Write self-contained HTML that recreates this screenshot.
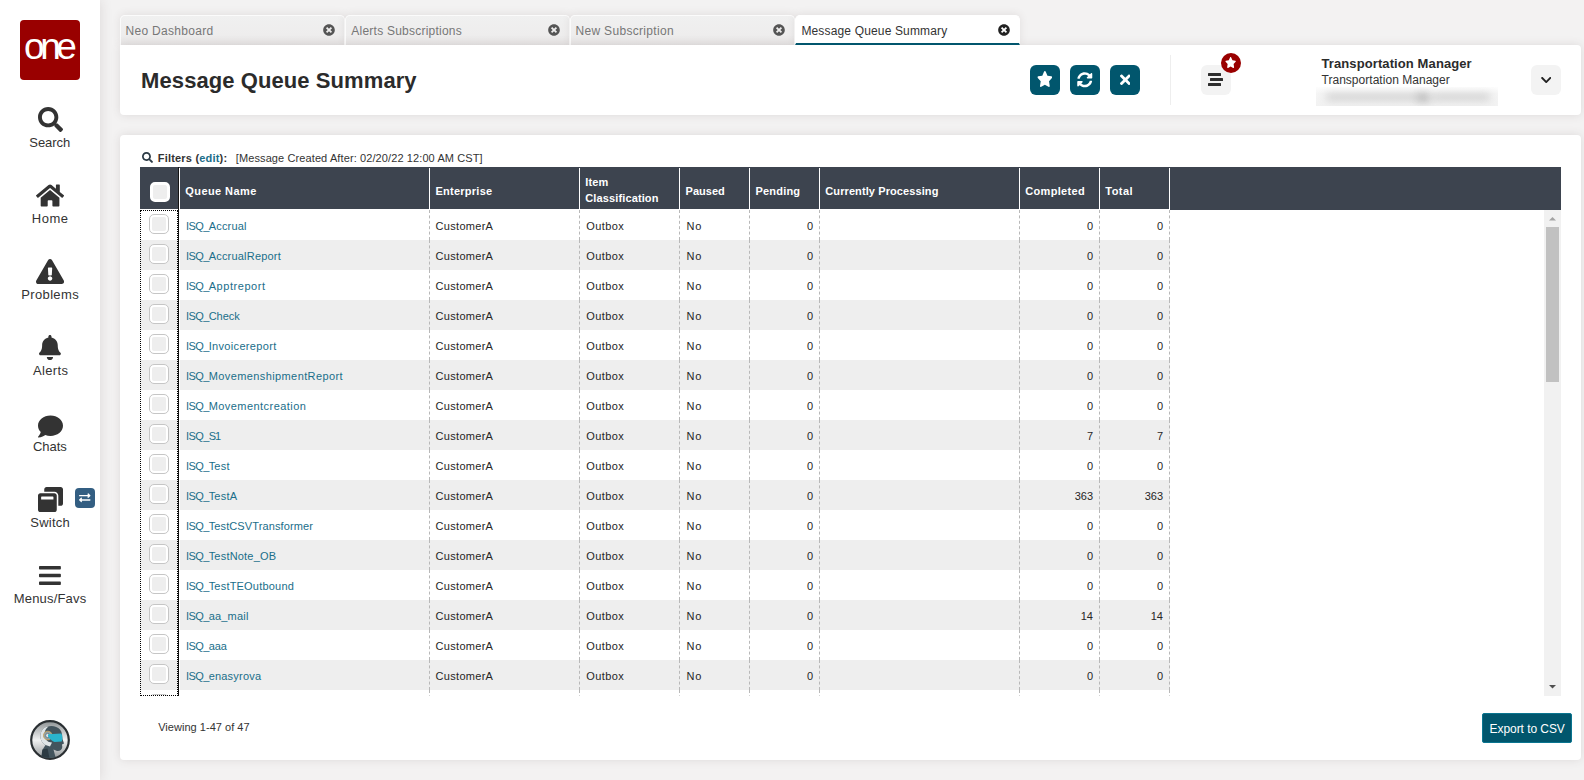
<!DOCTYPE html>
<html lang="en">
<head>
<meta charset="utf-8">
<title>Message Queue Summary</title>
<style>
*{box-sizing:border-box;margin:0;padding:0}
html,body{width:1584px;height:780px;overflow:hidden}
body{background:#f3f2f2;font-family:"Liberation Sans",sans-serif;color:#333;position:relative}
svg{display:block}
/* sidebar */
#side{position:absolute;left:0;top:0;width:100px;height:780px;background:#fff;box-shadow:0 0 12px rgba(60,40,40,.13);z-index:5}
#logo{position:absolute;left:20px;top:20px;width:60px;height:60px;border-radius:4px;background:#990000;color:#fff;overflow:hidden}
#logo span{position:absolute;left:4px;top:7px;font-size:37px;line-height:40px;letter-spacing:-4.4px;white-space:nowrap}
.nav{position:absolute;left:0;width:100px;text-align:center;font-size:13px;color:#333;line-height:16px;white-space:nowrap}
#swb{position:absolute;left:75px;top:488px;width:20px;height:20px;border-radius:4px;background:#335e82}
/* tabs */
.tab{position:absolute;top:15px;height:30px;border-radius:5px 5px 0 0;box-shadow:0 -1px 9px rgba(80,60,60,.10);background:linear-gradient(#f0f0f0 0,#eeeded 65%,#e6e4e4 100%);border:1px solid #fbfbfb;border-bottom:0;font-size:12px;color:#777;line-height:31px;padding-left:5px;white-space:nowrap}
.tab svg{position:absolute;right:9px;top:8px;fill:#555}
.tab.on{z-index:3;clip-path:inset(-12px -12px 0 -12px);background:#fff;color:#333;border-color:#fff;border-bottom:2px solid #01566d}
.tab.on svg{fill:#222;right:9.3px}
/* panels */
.panel{position:absolute;background:#fff;border-radius:4px;box-shadow:0 0 10px rgba(80,60,60,.13)}
#hdr{z-index:2;left:120px;top:45px;width:1461px;height:70px;border-radius:0 4px 4px 4px}
#title{position:absolute;left:20px;top:21px;font-size:22px;font-weight:bold;color:#2b2b2b;line-height:30px;white-space:nowrap}
.btn{position:absolute;top:20px;width:30px;height:30px;border-radius:6px;background:#01566d}
.btn svg{position:absolute;fill:#fff}
.gbtn{position:absolute;top:20px;width:30px;height:30px;border-radius:6px;background:#f3f3f3}
.gbtn i{position:absolute;width:13px;height:3px;background:#2e2e2e;border-radius:.5px}
#vdiv{position:absolute;left:1050px;top:10px;width:1px;height:50px;background:#eee}
#badge{position:absolute;left:1101px;top:8px;width:20px;height:20px;border-radius:50%;background:#990000}
#uname{position:absolute;left:1201px;top:11px;font-size:13px;font-weight:bold;line-height:16px;color:#2b2b2b;white-space:nowrap}
#urole{position:absolute;left:1201px;top:28px;font-size:12px;line-height:15px;color:#333;white-space:nowrap}
#ublur{position:absolute;left:1196px;top:42px;width:182px;height:19px;background:linear-gradient(#fdfdfd 0,#f5f5f5 35%,#f2f2f2 100%);overflow:hidden}
#ublur i{position:absolute;top:7px;height:6px;background:#8a8a8a;filter:blur(4px);opacity:.4}
#main{left:120px;top:135px;width:1461px;height:625px}
/* grid */
#filters{position:absolute;left:37px;top:16px;font-size:11px;line-height:14px;white-space:nowrap;color:#333}
#filters .lk{color:#1a6e8a}
#s_fv{margin-left:9px}
#ghead{position:absolute;left:20px;top:32px;width:1421px;height:42px;background:#3d444f}
.hc{position:absolute;top:1px;height:41px;border-right:1px solid #fff;color:#fff;font-weight:bold;font-size:11px;padding-left:5px;line-height:16px}
.hc>span{position:absolute;left:5px;top:15px;white-space:nowrap}
.hc>span.two{top:7px;line-height:15.5px}
.hcb{position:absolute;left:10px;top:14px;width:20px;height:20px;border-radius:5px;background:#eee;border:3px solid #fff}
#gbody{position:absolute;left:20px;top:75px;width:1404px;height:486px;overflow:hidden}
.row{position:absolute;left:0;width:1030px;height:30px}
.row.alt{background:#eee}
.c{position:absolute;top:0;height:30px;line-height:32px;font-size:11px;color:#262626;padding:0 6px;white-space:nowrap;border-right:1px dashed #b8b8b8}
.c.r{text-align:right}
.c.l{color:#1a6e8a}
.vline{position:absolute;top:0;width:0;height:486px;border-left:1px dashed #b5b5b5}
.cb{position:absolute;left:9px;top:4px;width:20px;height:20px;border:1px solid #c6c6c6;border-radius:5px;background:#fff}
.cb:after{content:"";position:absolute;left:2px;top:2px;right:2px;bottom:2px;background:#eee;border-radius:2px}
#focus{position:absolute;left:0;top:0;width:38px;height:486px;border:1px dotted #000}
#fl{position:absolute;left:38px;top:0;width:1px;height:486px;background:#111}
#wl{position:absolute;left:39px;top:0;width:1px;height:486px;background:#fff}
#sbar{position:absolute;left:1424px;top:75px;width:17px;height:486px}
#viewing{position:absolute;left:37px;top:585px;font-size:11px;line-height:14px;color:#333;white-space:nowrap}
#export{position:absolute;left:1362px;top:578px;width:90px;height:30px;background:#01566d;border:1px solid #0a7590;color:#fff;font-size:12px;line-height:28px;padding-top:1px;border-radius:2px;text-align:center;white-space:nowrap}
</style>
</head>
<body>
<div id="side">
<div id="logo"><span>one</span></div>
<svg viewBox="0 0 512 512" width="25.00" height="25" style="position:absolute;left:37.50px;top:107px;fill:#333"><path d="M505 442.7L405.3 343c-4.5-4.5-10.6-7-17-7H372c27.600-35.300 44-79.700 44-128C416 93.100 322.900 0 208 0S0 93.100 0 208s93.100 208 208 208c48.300 0 92.700-16.400 128-44v16.300c0 6.400 2.500 12.500 7 17l99.700 99.700c9.400 9.400 24.600 9.400 33.900 0l28.300-28.300c9.400-9.400 9.400-24.600.1-34zM208 336c-70.700 0-128-57.200-128-128 0-70.700 57.200-128 128-128 70.700 0 128 57.200 128 128 0 70.700-57.200 128-128 128z"/></svg>
<div class="nav" style="top:135px"><span id="s_nav0" style="letter-spacing:-0.060px;position:relative;left:-0.30px">Search</span></div>
<svg viewBox="0 0 576 512" width="28.12" height="25" style="position:absolute;left:35.94px;top:183px;fill:#333"><path d="M280.37 148.26L96 300.11V464a16 16 0 0 0 16 16l112.060-.29a16 16 0 0 0 15.920-16V368a16 16 0 0 1 16-16h64a16 16 0 0 1 16 16v95.640a16 16 0 0 0 16 16.050L464 480a16 16 0 0 0 16-16V300L295.670 148.260a12.190 12.190 0 0 0-15.300 0zM571.600 251.470L488 182.560V44.050a12 12 0 0 0-12-12h-56a12 12 0 0 0-12 12v72.610L318.470 43a48 48 0 0 0-61 0L4.340 251.470a12 12 0 0 0-1.600 16.900l25.500 31A12 12 0 0 0 45.150 301l235.220-193.740a12.190 12.190 0 0 1 15.300 0L530.900 301a12 12 0 0 0 16.900-1.600l25.500-31a12 12 0 0 0-1.700-16.930z"/></svg>
<div class="nav" style="top:211px"><span id="s_nav1" style="letter-spacing:0.517px;position:relative;left:0.15px">Home</span></div>
<svg viewBox="0 0 576 512" width="28.12" height="25" style="position:absolute;left:35.94px;top:259px;fill:#333"><path d="M569.517 440.013C587.975 472.007 564.806 512 527.940 512H48.054c-36.937 0-59.999-40.055-41.577-71.987L246.423 23.985c18.467-32.009 64.720-31.951 83.154 0l239.940 416.028zM288 354c-25.405 0-46 20.595-46 46s20.595 46 46 46 46-20.595 46-46-20.595-46-46-46zm-43.673-165.346l7.418 136c.347 6.364 5.609 11.346 11.982 11.346h48.546c6.373 0 11.635-4.982 11.982-11.346l7.418-136c.375-6.874-5.098-12.654-11.982-12.654h-63.383c-6.884 0-12.356 5.780-11.981 12.654z"/></svg>
<div class="nav" style="top:287px"><span id="s_nav2" style="letter-spacing:0.349px;position:relative;left:0.15px">Problems</span></div>
<svg viewBox="0 0 448 512" width="21.88" height="25" style="position:absolute;left:39.06px;top:335px;fill:#333"><path d="M224 512c35.320 0 63.970-28.650 63.970-64H160.030c0 35.350 28.650 64 63.970 64zm215.390-149.710c-19.320-20.760-55.470-51.990-55.470-154.290 0-77.700-54.480-139.900-127.940-155.160V32c0-17.670-14.320-32-31.980-32s-31.980 14.330-31.980 32v20.840C118.560 68.100 64.080 130.300 64.080 208c0 102.300-36.150 133.530-55.470 154.290-6 6.450-8.660 14.160-8.610 21.710.110 16.400 12.980 32 32.100 32h383.800c19.120 0 32-15.600 32.100-32 .050-7.550-2.610-15.270-8.610-21.710z"/></svg>
<div class="nav" style="top:363px"><span id="s_nav3" style="letter-spacing:0.360px;position:relative;left:0.59px">Alerts</span></div>
<svg viewBox="0 0 512 512" width="25.00" height="25" style="position:absolute;left:37.50px;top:413.6px;fill:#333"><path d="M256 32C114.600 32 0 125.100 0 240c0 49.600 21.400 95 57 130.700C44.500 421.100 2.700 466 2.200 466.500c-2.200 2.300-2.800 5.700-1.500 8.700S4.800 480 8 480c66.300 0 116-31.800 140.600-51.400 32.700 12.300 69 19.400 107.400 19.400 141.400 0 256-93.100 256-208S397.400 32 256 32z"/></svg>
<div class="nav" style="top:439.0px"><span id="s_nav4" style="letter-spacing:-0.025px;position:relative;left:-0.20px">Chats</span></div>
<svg viewBox="0 0 512 512" width="25.00" height="25" style="position:absolute;left:37.50px;top:487px;fill:#333"><path d="M512 48v288c0 26.500-21.500 48-48 48h-48V176c0-44.100-35.900-80-80-80H128V48c0-26.500 21.500-48 48-48h288c26.500 0 48 21.500 48 48zM384 176v288c0 26.500-21.500 48-48 48H48c-26.500 0-48-21.500-48-48V176c0-26.500 21.500-48 48-48h288c26.500 0 48 21.500 48 48zm-68 28c0-6.600-5.400-12-12-12H76c-6.600 0-12 5.400-12 12v52h252v-52z"/></svg>
<div class="nav" style="top:515px"><span id="s_nav5" style="letter-spacing:0.236px;position:relative;left:0.12px">Switch</span></div>
<svg viewBox="0 0 448 512" width="21.88" height="25" style="position:absolute;left:39.06px;top:563px;fill:#333"><path d="M16 132h416c8.837 0 16-7.163 16-16V76c0-8.837-7.163-16-16-16H16C7.163 60 0 67.163 0 76v40c0 8.837 7.163 16 16 16zm0 160h416c8.837 0 16-7.163 16-16v-40c0-8.837-7.163-16-16-16H16c-8.837 0-16 7.163-16 16v40c0 8.837 7.163 16 16 16zm0 160h416c8.837 0 16-7.163 16-16v-40c0-8.837-7.163-16-16-16H16c-8.837 0-16 7.163-16 16v40c0 8.837 7.163 16 16 16z"/></svg>
<div class="nav" style="top:591px"><span id="s_nav6" style="letter-spacing:0.177px;position:relative;left:0.10px">Menus/Favs</span></div>
<div id="swb"><svg viewBox="0 0 512 512" width="11.50" height="11.5" style="position:absolute;left:4.25px;top:4.25px;fill:#fff"><path d="M0 168v-16c0-13.255 10.745-24 24-24h360V80c0-21.367 25.899-32.042 40.971-16.971l80 80c9.372 9.373 9.372 24.569 0 33.941l-80 80C409.956 271.982 384 261.456 384 240v-48H24c-13.255 0-24-10.745-24-24zm488 152H128v-48c0-21.314-25.862-32.080-40.971-16.971l-80 80c-9.372 9.373-9.372 24.569 0 33.941l80 80C102.057 463.997 128 453.437 128 432v-48h360c13.255 0 24-10.745 24-24v-16c0-13.255-10.745-24-24-24z"/></svg></div>
<svg id="bot" width="40" height="40" viewBox="0 0 40 40" style="position:absolute;left:30px;top:720px">
<defs><linearGradient id="g1" x1="0" y1="0" x2="0" y2="1"><stop offset="0" stop-color="#8d9294"/><stop offset=".5" stop-color="#f1f2f2"/><stop offset="1" stop-color="#8f9496"/></linearGradient><linearGradient id="g2" x1="0" y1="0" x2="1" y2="0"><stop offset="0" stop-color="#2ab4cd" stop-opacity=".35"/><stop offset=".45" stop-color="#2ab4cd" stop-opacity=".9"/><stop offset="1" stop-color="#1fa6c2"/></linearGradient></defs>
<circle cx="20" cy="20" r="18.800" fill="url(#g1)" stroke="#2a2f32" stroke-width="2.2"/>
<path d="M11.500 36.500 L13 29 L15.500 25 C10 22 8.500 14 13 9 C17 5 26 4.500 30 9.500 C32.5 12.500 32 16 32.500 19 L34 23.500 L32 24.500 L32.3 27 C32 30 29.500 31.500 27 31 L23.500 29.500 L25.500 37.300 C21 38.500 16 38.500 11.500 36.500Z" fill="#43545d"/>
<path d="M15.5 25 C10 22 8.500 14 13 9 C14.5 7.500 16.500 6.800 18.500 6.500 C14.5 9.500 13.500 14 15.500 18.500 C17 21.500 19.500 22.500 22 22.500 L20 26.500 Z" fill="#dfe5e7"/>
<circle cx="17.8" cy="15.500" r="4.300" fill="#8fa1a8" stroke="#c9a45c" stroke-width=".9"/>
<circle cx="17.8" cy="15.500" r="2.200" fill="#dfe5e7" stroke="#5f747c" stroke-width=".8"/>
<path d="M18 14.300 L31.300 13.600 C32.6 15.500 32.600 19.500 31.700 21.600 L24.500 21.900 C21.500 21 19.500 18.500 18 16.500Z" fill="#2ab4cd"/>
<path d="M12.3 29.600 L17.500 28.500 L19.500 37.800 C16.500 37.800 13.500 37.300 11.500 36.500 Z" fill="#2c3a42"/>
</svg>
</div>
<div class="tab" style="left:120px;width:225px"><span id="s_tab0" style="letter-spacing:0.309px;position:relative;left:-0.50px">Neo Dashboard</span><svg viewBox="0 0 512 512" width="12.00" height="12" style=""><path d="M256 8C119 8 8 119 8 256s111 248 248 248 248-111 248-248S393 8 256 8zm121.600 313.100c4.700 4.700 4.700 12.300 0 17L338 377.600c-4.700 4.700-12.300 4.700-17 0L256 312l-65.100 65.600c-4.700 4.700-12.300 4.700-17 0L134.400 338c-4.700-4.700-4.700-12.300 0-17l65.600-65-65.600-65.100c-4.700-4.700-4.700-12.300 0-17l39.600-39.600c4.700-4.700 12.300-4.700 17 0l65 65.700 65.100-65.600c4.700-4.700 12.300-4.700 17 0l39.600 39.600c4.700 4.700 4.700 12.300 0 17L312 256l65.600 65.100z"/></svg></div>
<div class="tab" style="left:345px;width:225px"><span id="s_tab1" style="letter-spacing:0.231px;position:relative;left:0.30px">Alerts Subscriptions</span><svg viewBox="0 0 512 512" width="12.00" height="12" style=""><path d="M256 8C119 8 8 119 8 256s111 248 248 248 248-111 248-248S393 8 256 8zm121.600 313.100c4.700 4.700 4.700 12.300 0 17L338 377.600c-4.700 4.700-12.300 4.700-17 0L256 312l-65.100 65.600c-4.700 4.700-12.300 4.700-17 0L134.400 338c-4.700-4.700-4.700-12.300 0-17l65.600-65-65.600-65.100c-4.700-4.700-4.700-12.300 0-17l39.600-39.600c4.700-4.700 12.300-4.700 17 0l65 65.700 65.100-65.600c4.700-4.700 12.300-4.700 17 0l39.600 39.600c4.700 4.700 4.700 12.300 0 17L312 256l65.600 65.100z"/></svg></div>
<div class="tab" style="left:570px;width:225px"><span id="s_tab2" style="letter-spacing:0.313px;position:relative;left:-0.50px">New Subscription</span><svg viewBox="0 0 512 512" width="12.00" height="12" style=""><path d="M256 8C119 8 8 119 8 256s111 248 248 248 248-111 248-248S393 8 256 8zm121.600 313.100c4.700 4.700 4.700 12.300 0 17L338 377.600c-4.700 4.700-12.300 4.700-17 0L256 312l-65.100 65.600c-4.700 4.700-12.300 4.700-17 0L134.400 338c-4.700-4.700-4.700-12.300 0-17l65.600-65-65.600-65.100c-4.700-4.700-4.700-12.300 0-17l39.600-39.600c4.700-4.700 12.300-4.700 17 0l65 65.700 65.100-65.600c4.700-4.700 12.300-4.700 17 0l39.600 39.600c4.700 4.700 4.700 12.300 0 17L312 256l65.600 65.100z"/></svg></div>
<div class="tab on" style="left:795px;width:225px"><span id="s_tab3" style="letter-spacing:0.155px;position:relative;left:0.40px">Message Queue Summary</span><svg viewBox="0 0 512 512" width="12.00" height="12" style=""><path d="M256 8C119 8 8 119 8 256s111 248 248 248 248-111 248-248S393 8 256 8zm121.600 313.100c4.700 4.700 4.700 12.300 0 17L338 377.600c-4.700 4.700-12.300 4.700-17 0L256 312l-65.100 65.600c-4.700 4.700-12.300 4.700-17 0L134.400 338c-4.700-4.700-4.700-12.300 0-17l65.600-65-65.600-65.100c-4.700-4.700-4.700-12.300 0-17l39.600-39.600c4.700-4.700 12.300-4.700 17 0l65 65.700 65.100-65.600c4.700-4.700 12.300-4.700 17 0l39.600 39.600c4.700 4.700 4.700 12.300 0 17L312 256l65.600 65.100z"/></svg></div>
<div class="panel" id="hdr">
<div id="title"><span id="s_title" style="letter-spacing:0.080px;position:relative;left:1.10px">Message Queue Summary</span></div>
<div class="btn" style="left:910px"><svg viewBox="0 0 576 512" width="15.75" height="15.96" preserveAspectRatio="none" style="left:6.5px;top:6.4px"><path d="M259.3 17.8L194 150.200 47.900 171.500c-26.200 3.800-36.700 36.100-17.700 54.600l105.700 103-25 145.500c-4.500 26.300 23.200 46 46.400 33.700L288 439.600l130.700 68.700c23.200 12.200 50.900-7.400 46.400-33.700l-25-145.500 105.700-103c19-18.500 8.500-50.800-17.700-54.600L382 150.200 316.700 17.800c-11.700-23.600-45.600-23.900-57.400 0z"/></svg></div>
<div class="btn" style="left:950px"><svg viewBox="0 0 512 512" width="15.50" height="15.5" style="left:7.25px;top:7.25px"><path d="M370.72 133.28C339.458 104.008 298.888 87.962 255.848 88c-77.458.068-144.328 53.178-162.791 126.850-1.344 5.363-6.122 9.150-11.651 9.150H24.103c-7.498 0-13.194-6.807-11.807-14.176C33.933 94.924 134.813 8 256 8c66.448 0 126.791 26.136 171.315 68.685L463.030 40.970C478.149 25.851 504 36.559 504 57.941V192c0 13.255-10.745 24-24 24H345.941c-21.382 0-32.090-25.851-16.971-40.971l41.750-41.749zM32 296h134.059c21.382 0 32.090 25.851 16.971 40.971l-41.750 41.750c31.262 29.273 71.835 45.319 114.876 45.280 77.418-.070 144.315-53.144 162.787-126.849 1.344-5.363 6.122-9.150 11.651-9.150h57.304c7.498 0 13.194 6.807 11.807 14.176C478.067 417.076 377.187 504 256 504c-66.448 0-126.791-26.136-171.315-68.685L48.970 471.030C33.851 486.149 8 475.441 8 454.059V320c0-13.255 10.745-24 24-24z"/></svg></div>
<div class="btn" style="left:990px"><svg viewBox="0 0 352 512" width="10.66" height="15.5" style="left:9.6px;top:6.9px"><path d="M242.72 256l100.070-100.070c12.280-12.280 12.280-32.190 0-44.480l-22.240-22.240c-12.280-12.280-32.190-12.280-44.480 0L176 189.280 75.930 89.210c-12.280-12.280-32.190-12.280-44.480 0L9.210 111.450c-12.280 12.280-12.280 32.190 0 44.480L109.280 256 9.210 356.070c-12.280 12.280-12.280 32.190 0 44.480l22.240 22.240c12.280 12.280 32.200 12.280 44.480 0L176 322.720l100.070 100.070c12.280 12.280 32.200 12.280 44.480 0l22.240-22.240c12.280-12.280 12.280-32.190 0-44.480L242.720 256z"/></svg></div>
<div id="vdiv"></div>
<div class="gbtn" style="left:1081px"><i style="left:7px;top:8px"></i><i style="left:9px;top:13px"></i><i style="left:7px;top:18px"></i></div>
<div id="badge"><svg viewBox="0 0 576 512" width="11.25" height="11.00" preserveAspectRatio="none" style="position:absolute;left:4.4px;top:4.3px;fill:#fff"><path d="M259.3 17.8L194 150.200 47.900 171.500c-26.200 3.800-36.700 36.100-17.700 54.600l105.700 103-25 145.500c-4.500 26.300 23.200 46 46.400 33.700L288 439.600l130.700 68.700c23.200 12.200 50.900-7.400 46.400-33.700l-25-145.500 105.700-103c19-18.500 8.500-50.800-17.700-54.600L382 150.200 316.700 17.800c-11.700-23.600-45.600-23.900-57.400 0z"/></svg></div>
<div id="uname"><span id="s_uname" style="letter-spacing:0.100px;position:relative;left:0.50px">Transportation Manager</span></div>
<div id="urole"><span id="s_urole" style="letter-spacing:0.029px;position:relative;left:0.50px">Transportation Manager</span></div>
<div id="ublur"><i style="left:10px;width:96px"></i><i style="left:102px;width:12px;height:9px;top:6px;opacity:.55"></i><i style="left:116px;width:58px"></i></div>
<div class="gbtn" style="left:1411px"><svg viewBox="0 0 448 512" width="10.50" height="12" style="position:absolute;left:9.75px;top:9px;fill:#222"><path d="M207.029 381.476L12.686 187.132c-9.373-9.373-9.373-24.569 0-33.941l22.667-22.667c9.357-9.357 24.522-9.375 33.901-.040L224 284.505l154.745-154.021c9.379-9.335 24.544-9.317 33.901.040l22.667 22.667c9.373 9.373 9.373 24.569 0 33.941L240.971 381.476c-9.373 9.372-24.569 9.372-33.942 0z"/></svg></div>
</div>
<div class="panel" id="main">
<svg viewBox="0 0 512 512" width="11.00" height="11" style="position:absolute;left:21.6px;top:17.2px;fill:#2b3a45"><path d="M505 442.7L405.3 343c-4.5-4.5-10.6-7-17-7H372c27.600-35.300 44-79.700 44-128C416 93.100 322.900 0 208 0S0 93.100 0 208s93.100 208 208 208c48.300 0 92.700-16.400 128-44v16.300c0 6.400 2.500 12.500 7 17l99.700 99.700c9.400 9.400 24.600 9.400 33.900 0l28.300-28.300c9.400-9.400 9.400-24.600.1-34zM208 336c-70.700 0-128-57.200-128-128 0-70.700 57.200-128 128-128 70.700 0 128 57.200 128 128 0 70.700-57.200 128-128 128z"/></svg>
<div id="filters"><span id="s_flt" style="letter-spacing:0.193px;position:relative;left:0.80px"><b>Filters (<span class="lk">edit</span>):</b></span> <span id="s_fv" style="letter-spacing:0.105px;position:relative;left:-2.80px">[Message Created After: 02/20/22 12:00 AM CST]</span></div>
<div id="ghead">
<div class="hc" style="left:0px;width:40px;padding:0"><div class="hcb"></div></div><div style="position:absolute;left:38px;top:0;width:1px;height:43px;background:#151515"></div>
<div class="hc" style="left:40px;width:250px"><span><span id="s_h1" style="letter-spacing:0.423px;position:relative;left:0.30px">Queue Name</span></span></div>
<div class="hc" style="left:290px;width:150px"><span><span id="s_h2" style="letter-spacing:0.244px;position:relative;left:0.50px">Enterprise</span></span></div>
<div class="hc" style="left:440px;width:100px"><span class="two"><span id="s_h3a" style="letter-spacing:0.122px;position:relative;left:0.30px">Item</span><br><span id="s_h3b" style="letter-spacing:0.122px;position:relative;left:0.30px">Classification</span></span></div>
<div class="hc" style="left:540px;width:70px"><span><span id="s_h4" style="letter-spacing:0.040px;position:relative;left:0.50px">Paused</span></span></div>
<div class="hc" style="left:610px;width:70px"><span><span id="s_h5" style="letter-spacing:0.200px;position:relative;left:0.50px">Pending</span></span></div>
<div class="hc" style="left:680px;width:200px"><span><span id="s_h6" style="letter-spacing:0.095px;position:relative;left:0.30px">Currently Processing</span></span></div>
<div class="hc" style="left:880px;width:80px"><span><span id="s_h7" style="letter-spacing:0.312px;position:relative;left:0.30px">Completed</span></span></div>
<div class="hc" style="left:960px;width:70px"><span><span id="s_h8" style="letter-spacing:0.475px;position:relative;left:0.30px">Total</span></span></div>
<div style="position:absolute;left:1030px;top:42px;width:391px;height:1px;background:#3d444f"></div>
</div>
<div id="gbody">
<div class="row" style="top:0px">
<div class="cb"></div>
<div class="c l" style="left:40px;width:250px"><span id="s_n0" style="letter-spacing:0.200px;position:relative;left:0.00px"><span style="letter-spacing:-0.6px">ISQ_</span>Accrual</span></div>
<div class="c" style="left:290px;width:150px"><span id="s_e0" style="letter-spacing:0.289px;position:relative;left:-0.40px">CustomerA</span></div>
<div class="c" style="left:440px;width:100px"><span id="s_o0" style="letter-spacing:0.440px;position:relative;left:0.20px">Outbox</span></div>
<div class="c" style="left:540px;width:70px"><span id="s_p0" style="letter-spacing:0.810px;position:relative;left:0.50px">No</span></div>
<div class="c r" style="left:610px;width:70px">0</div>
<div class="c" style="left:680px;width:200px"></div>
<div class="c r" style="left:880px;width:80px">0</div>
<div class="c r" style="left:960px;width:70px">0</div>
</div>
<div class="row alt" style="top:30px">
<div class="cb"></div>
<div class="c l" style="left:40px;width:250px"><span id="s_n1" style="letter-spacing:0.200px;position:relative;left:0.00px"><span style="letter-spacing:-0.6px">ISQ_</span>AccrualReport</span></div>
<div class="c" style="left:290px;width:150px"><span id="s_e1" style="letter-spacing:0.289px;position:relative;left:-0.40px">CustomerA</span></div>
<div class="c" style="left:440px;width:100px"><span id="s_o1" style="letter-spacing:0.440px;position:relative;left:0.20px">Outbox</span></div>
<div class="c" style="left:540px;width:70px"><span id="s_p1" style="letter-spacing:0.810px;position:relative;left:0.50px">No</span></div>
<div class="c r" style="left:610px;width:70px">0</div>
<div class="c" style="left:680px;width:200px"></div>
<div class="c r" style="left:880px;width:80px">0</div>
<div class="c r" style="left:960px;width:70px">0</div>
</div>
<div class="row" style="top:60px">
<div class="cb"></div>
<div class="c l" style="left:40px;width:250px"><span id="s_n2" style="letter-spacing:0.550px;position:relative;left:0.00px"><span style="letter-spacing:-0.6px">ISQ_</span>Apptreport</span></div>
<div class="c" style="left:290px;width:150px"><span id="s_e2" style="letter-spacing:0.289px;position:relative;left:-0.40px">CustomerA</span></div>
<div class="c" style="left:440px;width:100px"><span id="s_o2" style="letter-spacing:0.440px;position:relative;left:0.20px">Outbox</span></div>
<div class="c" style="left:540px;width:70px"><span id="s_p2" style="letter-spacing:0.810px;position:relative;left:0.50px">No</span></div>
<div class="c r" style="left:610px;width:70px">0</div>
<div class="c" style="left:680px;width:200px"></div>
<div class="c r" style="left:880px;width:80px">0</div>
<div class="c r" style="left:960px;width:70px">0</div>
</div>
<div class="row alt" style="top:90px">
<div class="cb"></div>
<div class="c l" style="left:40px;width:250px"><span id="s_n3" style="letter-spacing:0.000px;position:relative;left:0.00px"><span style="letter-spacing:-0.6px">ISQ_</span>Check</span></div>
<div class="c" style="left:290px;width:150px"><span id="s_e3" style="letter-spacing:0.289px;position:relative;left:-0.40px">CustomerA</span></div>
<div class="c" style="left:440px;width:100px"><span id="s_o3" style="letter-spacing:0.440px;position:relative;left:0.20px">Outbox</span></div>
<div class="c" style="left:540px;width:70px"><span id="s_p3" style="letter-spacing:0.810px;position:relative;left:0.50px">No</span></div>
<div class="c r" style="left:610px;width:70px">0</div>
<div class="c" style="left:680px;width:200px"></div>
<div class="c r" style="left:880px;width:80px">0</div>
<div class="c r" style="left:960px;width:70px">0</div>
</div>
<div class="row" style="top:120px">
<div class="cb"></div>
<div class="c l" style="left:40px;width:250px"><span id="s_n4" style="letter-spacing:0.335px;position:relative;left:0.00px"><span style="letter-spacing:-0.6px">ISQ_</span>Invoicereport</span></div>
<div class="c" style="left:290px;width:150px"><span id="s_e4" style="letter-spacing:0.289px;position:relative;left:-0.40px">CustomerA</span></div>
<div class="c" style="left:440px;width:100px"><span id="s_o4" style="letter-spacing:0.440px;position:relative;left:0.20px">Outbox</span></div>
<div class="c" style="left:540px;width:70px"><span id="s_p4" style="letter-spacing:0.810px;position:relative;left:0.50px">No</span></div>
<div class="c r" style="left:610px;width:70px">0</div>
<div class="c" style="left:680px;width:200px"></div>
<div class="c r" style="left:880px;width:80px">0</div>
<div class="c r" style="left:960px;width:70px">0</div>
</div>
<div class="row alt" style="top:150px">
<div class="cb"></div>
<div class="c l" style="left:40px;width:250px"><span id="s_n5" style="letter-spacing:0.400px;position:relative;left:0.00px"><span style="letter-spacing:-0.6px">ISQ_</span>MovemenshipmentReport</span></div>
<div class="c" style="left:290px;width:150px"><span id="s_e5" style="letter-spacing:0.289px;position:relative;left:-0.40px">CustomerA</span></div>
<div class="c" style="left:440px;width:100px"><span id="s_o5" style="letter-spacing:0.440px;position:relative;left:0.20px">Outbox</span></div>
<div class="c" style="left:540px;width:70px"><span id="s_p5" style="letter-spacing:0.810px;position:relative;left:0.50px">No</span></div>
<div class="c r" style="left:610px;width:70px">0</div>
<div class="c" style="left:680px;width:200px"></div>
<div class="c r" style="left:880px;width:80px">0</div>
<div class="c r" style="left:960px;width:70px">0</div>
</div>
<div class="row" style="top:180px">
<div class="cb"></div>
<div class="c l" style="left:40px;width:250px"><span id="s_n6" style="letter-spacing:0.445px;position:relative;left:0.00px"><span style="letter-spacing:-0.6px">ISQ_</span>Movementcreation</span></div>
<div class="c" style="left:290px;width:150px"><span id="s_e6" style="letter-spacing:0.289px;position:relative;left:-0.40px">CustomerA</span></div>
<div class="c" style="left:440px;width:100px"><span id="s_o6" style="letter-spacing:0.440px;position:relative;left:0.20px">Outbox</span></div>
<div class="c" style="left:540px;width:70px"><span id="s_p6" style="letter-spacing:0.810px;position:relative;left:0.50px">No</span></div>
<div class="c r" style="left:610px;width:70px">0</div>
<div class="c" style="left:680px;width:200px"></div>
<div class="c r" style="left:880px;width:80px">0</div>
<div class="c r" style="left:960px;width:70px">0</div>
</div>
<div class="row alt" style="top:210px">
<div class="cb"></div>
<div class="c l" style="left:40px;width:250px"><span id="s_n7" style="letter-spacing:-0.920px;position:relative;left:0.00px"><span style="letter-spacing:-0.6px">ISQ_</span>S1</span></div>
<div class="c" style="left:290px;width:150px"><span id="s_e7" style="letter-spacing:0.289px;position:relative;left:-0.40px">CustomerA</span></div>
<div class="c" style="left:440px;width:100px"><span id="s_o7" style="letter-spacing:0.440px;position:relative;left:0.20px">Outbox</span></div>
<div class="c" style="left:540px;width:70px"><span id="s_p7" style="letter-spacing:0.810px;position:relative;left:0.50px">No</span></div>
<div class="c r" style="left:610px;width:70px">0</div>
<div class="c" style="left:680px;width:200px"></div>
<div class="c r" style="left:880px;width:80px">7</div>
<div class="c r" style="left:960px;width:70px">7</div>
</div>
<div class="row" style="top:240px">
<div class="cb"></div>
<div class="c l" style="left:40px;width:250px"><span id="s_n8" style="letter-spacing:0.200px;position:relative;left:0.00px"><span style="letter-spacing:-0.6px">ISQ_</span>Test</span></div>
<div class="c" style="left:290px;width:150px"><span id="s_e8" style="letter-spacing:0.289px;position:relative;left:-0.40px">CustomerA</span></div>
<div class="c" style="left:440px;width:100px"><span id="s_o8" style="letter-spacing:0.440px;position:relative;left:0.20px">Outbox</span></div>
<div class="c" style="left:540px;width:70px"><span id="s_p8" style="letter-spacing:0.810px;position:relative;left:0.50px">No</span></div>
<div class="c r" style="left:610px;width:70px">0</div>
<div class="c" style="left:680px;width:200px"></div>
<div class="c r" style="left:880px;width:80px">0</div>
<div class="c r" style="left:960px;width:70px">0</div>
</div>
<div class="row alt" style="top:270px">
<div class="cb"></div>
<div class="c l" style="left:40px;width:250px"><span id="s_n9" style="letter-spacing:0.200px;position:relative;left:0.00px"><span style="letter-spacing:-0.6px">ISQ_</span>TestA</span></div>
<div class="c" style="left:290px;width:150px"><span id="s_e9" style="letter-spacing:0.289px;position:relative;left:-0.40px">CustomerA</span></div>
<div class="c" style="left:440px;width:100px"><span id="s_o9" style="letter-spacing:0.440px;position:relative;left:0.20px">Outbox</span></div>
<div class="c" style="left:540px;width:70px"><span id="s_p9" style="letter-spacing:0.810px;position:relative;left:0.50px">No</span></div>
<div class="c r" style="left:610px;width:70px">0</div>
<div class="c" style="left:680px;width:200px"></div>
<div class="c r" style="left:880px;width:80px">363</div>
<div class="c r" style="left:960px;width:70px">363</div>
</div>
<div class="row" style="top:300px">
<div class="cb"></div>
<div class="c l" style="left:40px;width:250px"><span id="s_n10" style="letter-spacing:0.114px;position:relative;left:0.00px"><span style="letter-spacing:-0.6px">ISQ_</span>TestCSVTransformer</span></div>
<div class="c" style="left:290px;width:150px"><span id="s_e10" style="letter-spacing:0.289px;position:relative;left:-0.40px">CustomerA</span></div>
<div class="c" style="left:440px;width:100px"><span id="s_o10" style="letter-spacing:0.440px;position:relative;left:0.20px">Outbox</span></div>
<div class="c" style="left:540px;width:70px"><span id="s_p10" style="letter-spacing:0.810px;position:relative;left:0.50px">No</span></div>
<div class="c r" style="left:610px;width:70px">0</div>
<div class="c" style="left:680px;width:200px"></div>
<div class="c r" style="left:880px;width:80px">0</div>
<div class="c r" style="left:960px;width:70px">0</div>
</div>
<div class="row alt" style="top:330px">
<div class="cb"></div>
<div class="c l" style="left:40px;width:250px"><span id="s_n11" style="letter-spacing:0.200px;position:relative;left:0.00px"><span style="letter-spacing:-0.6px">ISQ_</span>TestNote_OB</span></div>
<div class="c" style="left:290px;width:150px"><span id="s_e11" style="letter-spacing:0.289px;position:relative;left:-0.40px">CustomerA</span></div>
<div class="c" style="left:440px;width:100px"><span id="s_o11" style="letter-spacing:0.440px;position:relative;left:0.20px">Outbox</span></div>
<div class="c" style="left:540px;width:70px"><span id="s_p11" style="letter-spacing:0.810px;position:relative;left:0.50px">No</span></div>
<div class="c r" style="left:610px;width:70px">0</div>
<div class="c" style="left:680px;width:200px"></div>
<div class="c r" style="left:880px;width:80px">0</div>
<div class="c r" style="left:960px;width:70px">0</div>
</div>
<div class="row" style="top:360px">
<div class="cb"></div>
<div class="c l" style="left:40px;width:250px"><span id="s_n12" style="letter-spacing:0.200px;position:relative;left:0.00px"><span style="letter-spacing:-0.6px">ISQ_</span>TestTEOutbound</span></div>
<div class="c" style="left:290px;width:150px"><span id="s_e12" style="letter-spacing:0.289px;position:relative;left:-0.40px">CustomerA</span></div>
<div class="c" style="left:440px;width:100px"><span id="s_o12" style="letter-spacing:0.440px;position:relative;left:0.20px">Outbox</span></div>
<div class="c" style="left:540px;width:70px"><span id="s_p12" style="letter-spacing:0.810px;position:relative;left:0.50px">No</span></div>
<div class="c r" style="left:610px;width:70px">0</div>
<div class="c" style="left:680px;width:200px"></div>
<div class="c r" style="left:880px;width:80px">0</div>
<div class="c r" style="left:960px;width:70px">0</div>
</div>
<div class="row alt" style="top:390px">
<div class="cb"></div>
<div class="c l" style="left:40px;width:250px"><span id="s_n13" style="letter-spacing:0.200px;position:relative;left:0.00px"><span style="letter-spacing:-0.6px">ISQ_</span>aa_mail</span></div>
<div class="c" style="left:290px;width:150px"><span id="s_e13" style="letter-spacing:0.289px;position:relative;left:-0.40px">CustomerA</span></div>
<div class="c" style="left:440px;width:100px"><span id="s_o13" style="letter-spacing:0.440px;position:relative;left:0.20px">Outbox</span></div>
<div class="c" style="left:540px;width:70px"><span id="s_p13" style="letter-spacing:0.810px;position:relative;left:0.50px">No</span></div>
<div class="c r" style="left:610px;width:70px">0</div>
<div class="c" style="left:680px;width:200px"></div>
<div class="c r" style="left:880px;width:80px">14</div>
<div class="c r" style="left:960px;width:70px">14</div>
</div>
<div class="row" style="top:420px">
<div class="cb"></div>
<div class="c l" style="left:40px;width:250px"><span id="s_n14" style="letter-spacing:-0.057px;position:relative;left:0.00px"><span style="letter-spacing:-0.6px">ISQ_</span>aaa</span></div>
<div class="c" style="left:290px;width:150px"><span id="s_e14" style="letter-spacing:0.289px;position:relative;left:-0.40px">CustomerA</span></div>
<div class="c" style="left:440px;width:100px"><span id="s_o14" style="letter-spacing:0.440px;position:relative;left:0.20px">Outbox</span></div>
<div class="c" style="left:540px;width:70px"><span id="s_p14" style="letter-spacing:0.810px;position:relative;left:0.50px">No</span></div>
<div class="c r" style="left:610px;width:70px">0</div>
<div class="c" style="left:680px;width:200px"></div>
<div class="c r" style="left:880px;width:80px">0</div>
<div class="c r" style="left:960px;width:70px">0</div>
</div>
<div class="row alt" style="top:450px">
<div class="cb"></div>
<div class="c l" style="left:40px;width:250px"><span id="s_n15" style="letter-spacing:0.200px;position:relative;left:0.00px"><span style="letter-spacing:-0.6px">ISQ_</span>enasyrova</span></div>
<div class="c" style="left:290px;width:150px"><span id="s_e15" style="letter-spacing:0.289px;position:relative;left:-0.40px">CustomerA</span></div>
<div class="c" style="left:440px;width:100px"><span id="s_o15" style="letter-spacing:0.440px;position:relative;left:0.20px">Outbox</span></div>
<div class="c" style="left:540px;width:70px"><span id="s_p15" style="letter-spacing:0.810px;position:relative;left:0.50px">No</span></div>
<div class="c r" style="left:610px;width:70px">0</div>
<div class="c" style="left:680px;width:200px"></div>
<div class="c r" style="left:880px;width:80px">0</div>
<div class="c r" style="left:960px;width:70px">0</div>
</div>
<div class="row" style="top:480px;height:6px;overflow:hidden">
<div class="cb"></div>
<div class="c" style="left:40px;width:250px"></div>
<div class="c" style="left:290px;width:150px"></div>
<div class="c" style="left:440px;width:100px"></div>
<div class="c" style="left:540px;width:70px"></div>
<div class="c" style="left:610px;width:70px"></div>
<div class="c" style="left:680px;width:200px"></div>
<div class="c" style="left:880px;width:80px"></div>
<div class="c" style="left:960px;width:70px"></div>
</div>
<div id="wl"></div><div id="focus"></div><div id="fl"></div>
</div>
<div id="sbar"><svg width="17" height="486" viewBox="0 0 17 486" style="position:absolute;left:0;top:0">
<rect x="0" y="0" width="17" height="486" fill="#f1f1f1"/>
<rect x="2" y="17" width="13" height="155" fill="#c1c1c1"/>
<path d="M5 10.500 L8.500 7 L12 10.500Z" fill="#a3a3a3"/>
<path d="M5 475 L8.500 478.500 L12 475Z" fill="#505050"/>
</svg></div>
<div id="viewing"><span id="s_viewing" style="letter-spacing:0.030px;position:relative;left:1.20px">Viewing 1-47 of 47</span></div>
<div id="export"><span id="s_export" style="letter-spacing:-0.067px;position:relative;left:0.20px">Export to CSV</span></div>
</div>
</body>
</html>
